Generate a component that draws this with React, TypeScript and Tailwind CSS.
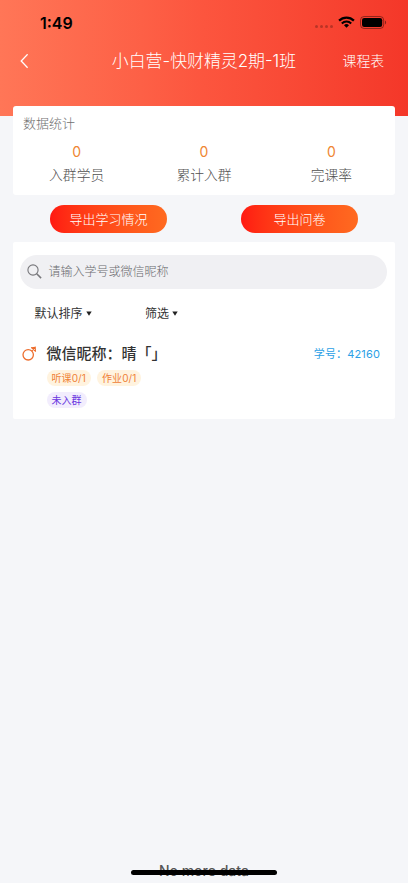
import React from 'react';

const stats = [
  { label: '入群学员', value: '0' },
  { label: '累计入群', value: '0' },
  { label: '完课率', value: '0' },
];

const actions = ['导出学习情况', '导出问卷'];

const students = [
  { name: '晴「」', no: '42160', progress: ['听课0/1', '作业0/1'], status: '未入群' },
];

const Caret = () => (
  <svg className="mb-px ml-[3px] h-[5px] w-[6px]" viewBox="0 0 6 5">
    <path d="M0.3 0.5h5.4L3 4.8z" fill="#222" />
  </svg>
);

const StatusBar = () => (
  <div className="flex h-[44px] items-center justify-between pl-[40px] pr-[21px]">
    <span className="mt-[2px] text-[16px] leading-5 font-semibold text-black">1:49</span>
    <div className="flex items-center">
      <div className="mt-[9px] mr-[5px] flex gap-[2px]">
        {[0, 1, 2, 3].map((dot) => (
          <span key={dot} className="size-[3px] rounded-full bg-black/25" />
        ))}
      </div>
      <svg className="mr-[5px] h-[12px] w-[17px]" viewBox="0 0 17 12">
        <path d="M1.1 4.6a10.6 10.6 0 0 1 14.8 0" fill="none" stroke="#000" strokeWidth="2.3" />
        <path d="M3.8 7.4a6.8 6.8 0 0 1 9.4 0" fill="none" stroke="#000" strokeWidth="2.1" />
        <path d="M8.5 11.8 6 9.3a3.6 3.6 0 0 1 5 0z" fill="#000" />
      </svg>
      <svg className="h-[13px] w-[27px]" viewBox="0 0 27 13">
        <rect x="0.5" y="0.5" width="23.2" height="12" rx="3.6" fill="none" stroke="#000" strokeOpacity="0.4" />
        <rect x="2" y="2" width="20.2" height="9" rx="2.2" fill="#000" />
        <path d="M25 4.6c1.5.5 1.5 3.3 0 3.8z" fill="#000" fillOpacity="0.45" />
      </svg>
    </div>
  </div>
);

const App = () => {
  return (
    <div className="relative flex h-[883px] w-[408px] flex-col overflow-hidden bg-[#f5f6f9] font-['Inter','Noto_Sans_CJK_SC',sans-serif] whitespace-nowrap">
      {/* Header */}
      <header className="h-[116.4px] shrink-0 bg-linear-to-r from-[#ff7657] via-[#fc553e] to-[#f43729]">
        <StatusBar />
        <div className="grid h-[34px] grid-cols-[80px_1fr_80px] items-center text-white">
          <svg className="ml-[20px] h-[15px] w-[9px]" viewBox="0 0 9 15">
            <path d="M7.6 0.3 1.2 7l6.4 6.7" fill="none" stroke="#fff" strokeWidth="1.3" />
          </svg>
          <h1 className="pt-[2px] text-center text-[16.9px] font-light">小白营-快财精灵2期-1班</h1>
          <span className="pr-[24px] text-right text-[13.8px] font-light">课程表</span>
        </div>
      </header>

      {/* Stats */}
      <section className="relative mx-[13px] -mt-[10px] h-[89px] shrink-0 rounded-[3px] bg-white pt-[7px]">
        <h2 className="pl-[10px] text-[13px] leading-5 font-light text-[#707070]">数据统计</h2>
        <div className="mt-[9px] grid grid-cols-3 text-center">
          {stats.map((stat) => (
            <div key={stat.label}>
              <p className="text-[14px] leading-5 text-[#ef8632]">{stat.value}</p>
              <p className="mt-[3px] text-[13.8px] leading-5 font-light text-[#505050]">{stat.label}</p>
            </div>
          ))}
        </div>
      </section>

      {/* Export buttons */}
      <div className="mx-[13px] mt-[10px] grid shrink-0 grid-cols-2 justify-items-center">
        {actions.map((action) => (
          <button
            key={action}
            className="h-[28px] w-[117px] rounded-full bg-linear-to-r from-[#ff1812] to-[#ff6a20] text-[13px] font-light text-white"
          >
            {action}
          </button>
        ))}
      </div>

      {/* Student list */}
      <section className="mx-[13px] mt-[8.6px] h-[177px] shrink-0 rounded-[2px] bg-white pt-[13px]">
        <div className="mr-[8px] ml-[7px] flex h-[34px] items-center rounded-full bg-[#f0f0f3] pl-[7px]">
          <svg className="h-[15px] w-[15px]" viewBox="0 0 15 15" fill="none" stroke="#77777b">
            <circle cx="6" cy="6" r="5.1" strokeWidth="1.1" />
            <path d="m9.7 9.7 4.4 4.4" strokeWidth="1.5" />
          </svg>
          <span className="ml-[6.5px] text-[12px] font-light text-[#6a6a6e]">请输入学号或微信昵称</span>
        </div>

        <div className="mt-[15px] flex h-[20px] items-center pl-[21.5px] text-[12px] text-[#333]">
          <div className="flex w-[110.5px] items-center">
            默认排序
            <Caret />
          </div>
          <div className="flex items-center">
            筛选
            <Caret />
          </div>
        </div>

        {students.map((student) => (
          <div key={student.no} className="mt-[19px] pr-[15px] pl-[9px]">
            <div className="flex h-[22px] items-center">
              <svg className="h-[15px] w-[15px]" viewBox="0 0 15 15" fill="none" stroke="#ed6d2d" strokeWidth="1.3">
                <circle cx="6.2" cy="8.8" r="5.2" />
                <path d="M9.6 5.2 13.6 1M9.2 1.3l4.6 4.4M9 1.7l4.2-.3.3 4" strokeWidth="1.1" />
              </svg>
              <h3 className="mt-px ml-[9.5px] text-[15px] font-medium text-[#333]">微信昵称：{student.name}</h3>
              <span className="ml-auto text-[11px] tracking-[0.15px] text-[#2b9fe6]">学号：{student.no}</span>
            </div>
            <div className="mt-[5px] ml-[24.5px] flex gap-[6px]">
              {student.progress.map((item) => (
                <span key={item} className="h-[16px] rounded-full bg-[#fff3df] px-[5px] text-[10px] leading-[17px] tracking-[0.1px] text-[#ef8137]">
                  {item}
                </span>
              ))}
            </div>
            <div className="mt-[6px] ml-[24.5px] flex">
              <span className="h-[16px] rounded-full bg-[#f2edfd] px-[5px] text-[10px] leading-[16px] text-[#6a37e0]">
                {student.status}
              </span>
            </div>
          </div>
        ))}
      </section>

      <p className="mt-auto mb-[2px] text-center text-[14px] leading-5 font-medium text-[#555]">No more data</p>

      {/* Home indicator */}
      <div className="absolute bottom-[8px] left-[131px] h-[5px] w-[146px] rounded-full bg-black" />
    </div>
  );
};

export default App;
